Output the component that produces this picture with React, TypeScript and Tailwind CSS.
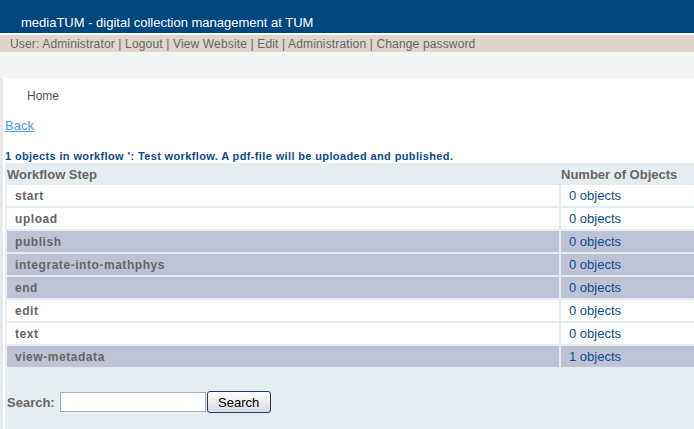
import React from "react";

const rows: { name: string; count: string; hl: boolean }[] = [
  { name: "start", count: "0 objects", hl: false },
  { name: "upload", count: "0 objects", hl: false },
  { name: "publish", count: "0 objects", hl: true },
  { name: "integrate-into-mathphys", count: "0 objects", hl: true },
  { name: "end", count: "0 objects", hl: true },
  { name: "edit", count: "0 objects", hl: false },
  { name: "text", count: "0 objects", hl: false },
  { name: "view-metadata", count: "1 objects", hl: true },
];

export default function App() {
  return (
    <div
      className="w-[694px] h-[429px] overflow-hidden bg-white flex flex-col"
      style={{ fontFamily: '"Liberation Sans", Arial, sans-serif' }}
    >
      <div className="h-[33px] bg-[#00467f] flex items-end pl-[21px] pb-[4px] text-[13px] text-white leading-none shrink-0">
        mediaTUM - digital collection management at TUM
      </div>
      <div className="h-[2px] bg-white shrink-0" />
      <div className="h-[17px] bg-[#dfd5cc] flex items-center pl-[10px] text-[12px] text-[#666] leading-none tracking-[0.15px] shrink-0">
        User: Administrator | Logout | View Website | Edit | Administration | Change password
      </div>
      <div className="h-[26px] bg-[#f3f5f4] shrink-0" />
      <div className="flex-1 flex border-l-[3px] border-[#e4eaed]">
        <div className="flex-1 flex flex-col pl-[2px]">
          <div className="h-[36px] flex items-center pl-[22px] text-[12px] text-[#555] leading-none">
            Home
          </div>
          <div className="h-[22px] flex items-center text-[13px] leading-none">
            <a className="text-[#4a9be2] underline">Back</a>
          </div>
          <div className="h-[27px] flex items-end pb-[1px] text-[11px] font-bold text-[#0d4a8b] leading-none tracking-[0.37px]">
            1 objects in workflow ': Test workflow. A pdf-file will be uploaded and published.
          </div>
          <div className="flex-1 bg-[#e6edf0] flex flex-col">
            <div className="h-[22px] flex items-center text-[13px] font-bold text-[#666] leading-none">
              <div className="w-[556px] pl-[2px]">Workflow Step</div>
              <div className="flex-1">Number of Objects</div>
            </div>
            <div className="flex flex-col gap-[2px] pl-[2px]">
              {rows.map((r) => (
                <div key={r.name} className="h-[21px] flex gap-[2px] leading-none">
                  <div
                    className={`w-[552px] flex items-center pl-[8px] text-[12px] font-bold text-[#666] tracking-[0.55px] ${
                      r.hl ? "bg-[#bfc2d4]" : "bg-white"
                    }`}
                  >
                    {r.name}
                  </div>
                  <div
                    className={`flex-1 flex items-center pl-[8px] text-[13px] text-[#0b4c92] ${
                      r.hl ? "bg-[#bfc2d4]" : "bg-white"
                    }`}
                  >
                    {r.count}
                  </div>
                </div>
              ))}
            </div>
            <div className="flex items-center pl-[2px] mt-[24px]">
              <span className="text-[13px] font-bold text-[#666] leading-none">Search:</span>
              <input
                type="text"
                className="ml-[5px] w-[146px] h-[20px] bg-white border border-[#a5acb2] outline-none"
              />
              <button className="ml-[1px] w-[64px] h-[22px] rounded-[3px] border border-[#1d3d6b] bg-gradient-to-b from-white to-[#d9dae3] text-[13px] text-black leading-none">
                Search
              </button>
            </div>
          </div>
        </div>
      </div>
    </div>
  );
}
